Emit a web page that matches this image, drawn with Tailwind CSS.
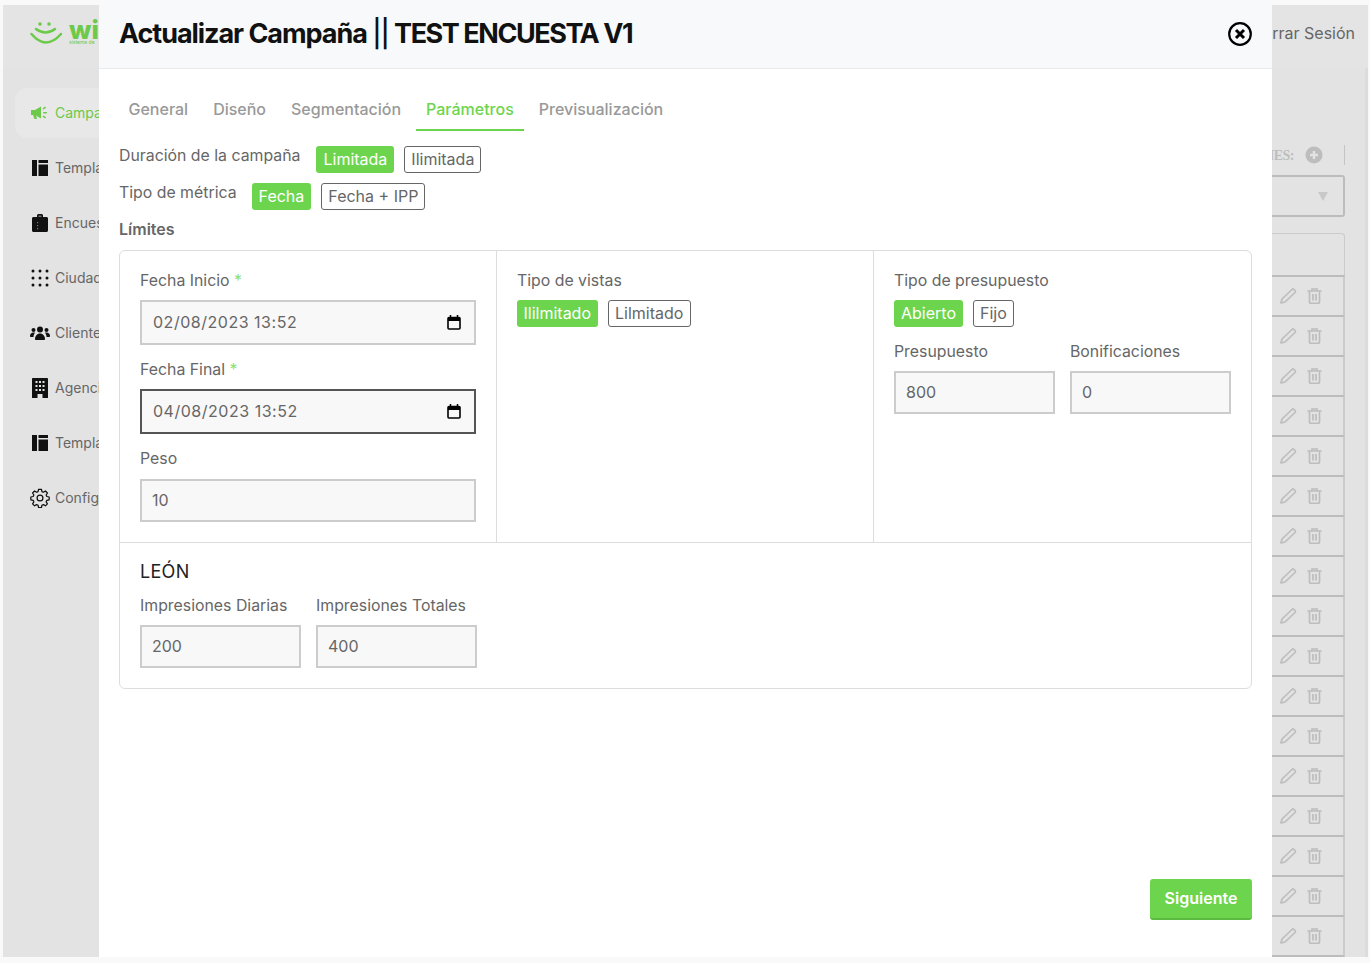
<!DOCTYPE html>
<html lang="es">
<head>
    <meta charset="UTF-8">
    <title>Actualizar Campaña</title>
    <script src="https://cdn.jsdelivr.net/npm/@tailwindcss/browser@4"></script>
</head>
<body class="overflow-hidden font-['Inter',sans-serif]">
<div class="relative w-[1370px] h-[963px] overflow-hidden bg-[#f9f9f9] pl-[3px] pr-[2px] pt-[5px] pb-[6px]">

    <!-- Page behind the modal -->
    <div class="flex flex-col h-full bg-[#e3e3e3]">
        <header class="flex items-center justify-between h-[63px] shrink-0 pb-[7px] pl-[27px] pr-[13px] bg-[#e4e4e4]">
            <div class="flex items-center gap-[7px]">
                <svg class="mt-[2px]" width="32" height="24" viewBox="0 0 32 24" fill="none"><circle cx="10" cy="2" r="1.800" fill="#6cc94a"/><circle cx="19" cy="2" r="1.800" fill="#6cc94a"/><path d="M6 7Q15.500 14 25 7" stroke="#6cc94a" stroke-width="2.500" stroke-linecap="round"/><path d="M1.500 12Q16 29 31 12" stroke="#6cc94a" stroke-width="2.500" stroke-linecap="round"/></svg>
                <div class="flex flex-col leading-none">
                    <span class="text-[26px] leading-[18px] font-extrabold text-[#6cc94a]">wi</span>
                    <span class="text-[5px] leading-[6px] text-[#6cc94a] whitespace-nowrap">sistema de</span>
                </div>
            </div>
            <span class="text-base text-[#666]">Cerrar Sesión</span>
        </header>
        <div class="flex flex-1 min-h-0 border-r-[3px] border-[#dcdcdc]">
            <!-- Sidebar -->
            <nav class="w-[200px] shrink-0 pt-[20px] pl-[12px] flex flex-col gap-[5px] text-sm text-[#666]">
                <a class="flex items-center gap-[6px] h-[50px] pl-[15px] rounded-xl bg-[#e8e8e8] text-[#6cc94a]">
                    <svg class="w-[19px] h-[16px]" viewBox="0 0 19 16" fill="#6cc94a"><path d="M1 5h4l6-3.500v12L5 10H1z"/><path d="M3 10h3l1 4H4.500z"/><rect x="13" y="7" width="4" height="1.500" rx=".7"/><rect x="12.500" y="2.500" width="3.500" height="1.500" rx=".7" transform="rotate(-35 14 3)"/><rect x="12.500" y="11" width="3.500" height="1.500" rx=".7" transform="rotate(35 14 12)"/></svg>
                    <span>Campañas</span>
                </a>
                <a class="flex items-center gap-[7px] h-[50px] pl-[17px]">
                    <svg class="w-[16px] h-[16px]" viewBox="0 0 16 16" fill="#111"><rect x="0" y="0" width="5" height="16"/><rect x="6.500" y="0" width="9.500" height="3"/><rect x="6.500" y="4.500" width="9.500" height="11.500"/></svg>
                    <span>Templates</span>
                </a>
                <a class="flex items-center gap-[7px] h-[50px] pl-[17px]">
                    <svg class="w-[16px] h-[18px]" viewBox="0 0 16 18" fill="#111"><path d="M1.500 3H5V1.500C5 .7 5.700 0 6.500 0h3C10.300 0 11 .7 11 1.500V3h3.500c.8 0 1.500.7 1.500 1.500V16.500c0 .8-.7 1.500-1.500 1.500h-13C.7 18 0 17.300 0 16.500V4.500C0 3.700.7 3 1.500 3z"/><g fill="#777"><rect x="6.500" y="1.500" width="3" height="1.500"/><rect x="5" y="8" width="1.200" height="1.200"/><rect x="5" y="11" width="1.200" height="1.200"/><rect x="5" y="14" width="1.200" height="1.200"/></g></svg>
                    <span>Encuestas</span>
                </a>
                <a class="flex items-center gap-[6px] h-[50px] pl-[16px]">
                    <svg class="w-[18px] h-[18px]" viewBox="0 0 18 18" fill="#111"><circle cx="2" cy="2" r="1.500"/><circle cx="9" cy="2" r="1.500"/><circle cx="16" cy="2" r="1.500"/><circle cx="2" cy="9" r="1.500"/><circle cx="9" cy="9" r="1.500"/><circle cx="16" cy="9" r="1.500"/><circle cx="2" cy="16" r="1.500"/><circle cx="9" cy="16" r="1.500"/><circle cx="16" cy="16" r="1.500"/></svg>
                    <span>Ciudades</span>
                </a>
                <a class="flex items-center gap-[5px] h-[50px] pl-[15px]">
                    <svg class="w-[20px] h-[14px]" viewBox="0 0 20 14" fill="#111"><circle cx="10" cy="3.500" r="3"/><circle cx="3.500" cy="4" r="2"/><circle cx="16.500" cy="4" r="2"/><path d="M5 13c0-3 2-5.500 5-5.500S15 10 15 13c0 .6-.4 1-1 1H6c-.6 0-1-.4-1-1z"/><path d="M0 10c0-2 1.500-3.500 3.500-3.500.6 0 1 .1 1.500.3C4 8 3.500 9.500 3.500 11H1c-.6 0-1-.4-1-1z"/><path d="M20 10c0-2-1.500-3.500-3.500-3.500-.6 0-1 .1-1.500.3 1 1.200 1.500 2.700 1.500 4.200H19c.6 0 1-.4 1-1z"/></svg>
                    <span>Clientes</span>
                </a>
                <a class="flex items-center gap-[7px] h-[50px] pl-[17px]">
                    <svg class="w-[16px] h-[20px]" viewBox="0 0 16 20" fill="#111" fill-rule="evenodd"><path d="M1 0h14c.6 0 1 .4 1 1v19h-5.500v-4h-5v4H0V1c0-.6.4-1 1-1zM3.500 3v2h2V3zm3.500 0v2h2V3zm3.500 0v2h2V3zM3.500 7v2h2V7zM7 7v2h2V7zm3.500 0v2h2V7zM3.500 11v2h2v-2zM7 11v2h2v-2zm3.500 0v2h2v-2z"/></svg>
                    <span>Agencias</span>
                </a>
                <a class="flex items-center gap-[7px] h-[50px] pl-[17px]">
                    <svg class="w-[16px] h-[16px]" viewBox="0 0 16 16" fill="#111"><rect x="0" y="0" width="5" height="16"/><rect x="6.500" y="0" width="9.500" height="3"/><rect x="6.500" y="4.500" width="9.500" height="11.500"/></svg>
                    <span>Templates</span>
                </a>
                <a class="flex items-center gap-[5px] h-[50px] pl-[15px]">
                    <svg class="w-[20px] h-[20px]" viewBox="0 0 24 24" fill="none" stroke="#111" stroke-width="1.500"><path d="M10.300 2.500h3.400l.6 2.800 1.800.8 2.400-1.500 2.400 2.400-1.500 2.400.8 1.800 2.800.6v3.400l-2.800.6-.8 1.800 1.500 2.400-2.400 2.400-2.400-1.500-1.800.8-.6 2.800h-3.400l-.6-2.800-1.800-.8-2.400 1.500-2.400-2.400 1.500-2.400-.8-1.800-2.800-.6v-3.400l2.800-.6.8-1.800-1.500-2.400 2.400-2.400 2.400 1.500 1.800-.8z" transform="translate(0 -1)" stroke-linejoin="round"/><circle cx="12" cy="12" r="3.500"/></svg>
                    <span>Configuración</span>
                </a>
            </nav>
            <!-- Main column, mostly behind the modal -->
            <main class="flex-1 min-w-0 pr-[20px] flex flex-col items-end">
                <div class="flex items-center h-[20px] mt-[77px] text-[#bdbdbd]">
                    <span class="font-['Liberation_Serif',serif] text-[14px] font-bold tracking-[-0.5px]">ACCIONES:</span>
                    <svg class="w-[18px] h-[18px] ml-[11px]" viewBox="0 0 18 18"><circle cx="9" cy="9" r="8.500" fill="#bdbdbd"/><path d="M9 5v8M5 9h8" stroke="#e3e3e3" stroke-width="2.500"/></svg>
                    <span class="w-px h-[20px] bg-[#c4c4c4] ml-[21px]"></span>
                </div>
                <div class="flex items-center justify-end w-[400px] h-[42px] mt-[10px] pr-[15px] border-2 border-[#bcbcbc] rounded-[3px]">
                    <svg class="w-[10px] h-[9px]" viewBox="0 0 12 11" fill="#c8c8c8"><path d="M0 0h12L6 11z"/></svg>
                </div>
                <div id="rows" class="w-[600px] mt-[16px] flex flex-col">
                    <div class="h-[44px] border border-b-2 border-[#cbcbcb] border-b-[#bcbcbc] rounded-t-[4px]"></div>
                </div>
            </main>
        </div>
    </div>

    <!-- Modal -->
    <section class="absolute left-[99px] top-0 w-[1173px] h-[957px] flex flex-col bg-white">
        <div class="flex items-center justify-between h-[69px] shrink-0 pl-[20px] pr-[20px] bg-[#f8f9fa] border-b border-[#e9ecef]">
            <h1 class="text-[27px] font-bold tracking-[-1.05px] text-[#111]">Actualizar Campaña <span class="font-medium">||</span> <span class="tracking-[-1.45px]">TEST ENCUESTA V1</span></h1>
            <svg class="w-[24px] h-[24px]" viewBox="0 0 24 24" fill="none" stroke="#000"><circle cx="12" cy="12" r="10.800" stroke-width="2.200"/><path d="M8 8l8 8M16 8l-8 8" stroke-width="3"/></svg>
        </div>

        <div class="flex flex-col flex-1 min-h-0 px-[20px]">
            <!-- Tabs -->
            <div class="flex gap-[5px] h-[62px] pt-[20px] -ml-[0.5px] text-base font-medium text-[#999]">
                <a class="h-[42px] px-[10px] pt-[9px] leading-[22px]">General</a>
                <a class="h-[42px] px-[10px] pt-[9px] leading-[22px]">Diseño</a>
                <a class="h-[42px] px-[10px] pt-[9px] leading-[22px]">Segmentación</a>
                <a class="h-[42px] px-[10px] pt-[9px] leading-[22px] text-[#6dd54d] border-b-2 border-[#6dd54d]">Parámetros</a>
                <a class="h-[42px] px-[10px] pt-[9px] leading-[22px]">Previsualización</a>
            </div>

            <div class="flex gap-[16px] mt-[15px] h-[27px] text-base text-[#666]">
                <span class="leading-[20px] text-[15.85px]">Duración de la campaña</span>
                <div class="flex gap-[10px]">
                    <span class="h-[27px] px-[7px] leading-[27px] rounded-[3px] bg-[#6dd54d] text-white">Limitada</span>
                    <span class="h-[27px] px-[6px] leading-[25px] rounded-[3px] border border-[#666]">Ilimitada</span>
                </div>
            </div>
            <div class="flex gap-[15px] mt-[10px] h-[27px] text-base text-[#666]">
                <span class="leading-[20px] text-[15.85px]">Tipo de métrica</span>
                <div class="flex gap-[10px]">
                    <span class="h-[27px] px-[7px] leading-[27px] rounded-[3px] bg-[#6dd54d] text-white">Fecha</span>
                    <span class="h-[27px] px-[6px] leading-[25px] rounded-[3px] border border-[#666]">Fecha + IPP</span>
                </div>
            </div>
            <div class="mt-[9px] h-[20px] leading-[20px] text-base font-semibold text-[#666]">Límites</div>

            <!-- Limits card -->
            <div class="mt-[11px] h-[439px] flex flex-col border border-[#ddd] rounded-[6px] text-base text-[#666]">
                <div class="grid grid-cols-3 h-[292px] border-b border-[#ddd]">
                    <div class="px-[20px] pt-[19px] border-r border-[#ddd]">
                        <label class="block h-[20px] leading-[22px] text-[15.85px]">Fecha Inicio <span class="text-[#8be06e]">*</span></label>
                        <div class="relative mt-[10px]">
                            <input value="02/08/2023 13:52" class="w-full h-[45px] pl-[11px] pb-[2px] border-2 border-[#ccc] bg-[#f8f8f8] text-[#666] outline-none tracking-[0.52px]">
                            <svg class="absolute right-[15px] top-[15px] w-[14px] h-[15px]" viewBox="0 0 14 15" fill="none" stroke="#000"><rect x="1" y="2.500" width="12" height="11.500" rx="1" stroke-width="1.600"/><path d="M1 4.500h12" stroke-width="3"/><path d="M3.500 0v3M10.500 0v3" stroke-width="1.500"/></svg>
                        </div>
                        <label class="block h-[20px] mt-[14px] leading-[22px] text-[15.85px]">Fecha Final <span class="text-[#8be06e]">*</span></label>
                        <div class="relative mt-[10px]">
                            <input value="04/08/2023 13:52" class="w-full h-[45px] pl-[11px] pb-[2px] border-2 border-[#555] bg-[#f8f8f8] text-[#666] outline-none tracking-[0.52px]">
                            <svg class="absolute right-[15px] top-[15px] w-[14px] h-[15px]" viewBox="0 0 14 15" fill="none" stroke="#000"><rect x="1" y="2.500" width="12" height="11.500" rx="1" stroke-width="1.600"/><path d="M1 4.500h12" stroke-width="3"/><path d="M3.500 0v3M10.500 0v3" stroke-width="1.500"/></svg>
                        </div>
                        <label class="block h-[20px] mt-[14px] leading-[22px] text-[15.85px]">Peso</label>
                        <input value="10" class="block w-full h-[43px] mt-[11px] pl-[10px] pb-[2px] border-2 border-[#ccc] bg-[#f8f8f8] text-[#666] outline-none">
                    </div>
                    <div class="px-[20px] pt-[19px] border-r border-[#ddd]">
                        <label class="block h-[20px] leading-[22px] text-[15.85px]">Tipo de vistas</label>
                        <div class="flex gap-[10px] mt-[10px]">
                            <span class="h-[27px] px-[6.5px] leading-[27px] rounded-[3px] bg-[#6dd54d] text-white">Ililmitado</span>
                            <span class="h-[27px] px-[6.5px] leading-[25px] rounded-[3px] border border-[#666]">Lilmitado</span>
                        </div>
                    </div>
                    <div class="px-[20px] pt-[19px]">
                        <label class="block h-[20px] leading-[22px] text-[15.85px]">Tipo de presupuesto</label>
                        <div class="flex gap-[10px] mt-[10px]">
                            <span class="h-[27px] px-[7px] leading-[27px] rounded-[3px] bg-[#6dd54d] text-white">Abierto</span>
                            <span class="h-[27px] px-[6px] leading-[25px] rounded-[3px] border border-[#666]">Fijo</span>
                        </div>
                        <div class="flex gap-[15px] mt-[14px]">
                            <div class="w-[161px]">
                                <label class="block h-[20px] leading-[22px] text-[15.85px]">Presupuesto</label>
                                <input value="800" class="block w-full h-[43px] mt-[10px] pl-[10px] pb-[2px] border-2 border-[#ccc] bg-[#f8f8f8] text-[#666] outline-none">
                            </div>
                            <div class="w-[161px]">
                                <label class="block h-[20px] leading-[22px] text-[15.85px]">Bonificaciones</label>
                                <input value="0" class="block w-full h-[43px] mt-[10px] pl-[10px] pb-[2px] border-2 border-[#ccc] bg-[#f8f8f8] text-[#666] outline-none">
                            </div>
                        </div>
                    </div>
                </div>
                <div class="px-[20px] pt-[18px]">
                    <div class="h-[22px] leading-[22px] text-lg tracking-[0.3px] text-[#222]">LEÓN</div>
                    <div class="flex gap-[15px] mt-[12px]">
                        <div class="w-[161px]">
                            <label class="block h-[20px] leading-[22px] whitespace-nowrap text-[15.85px]">Impresiones Diarias</label>
                            <input value="200" class="block w-full h-[43px] mt-[10px] pl-[10px] pb-[2px] border-2 border-[#ccc] bg-[#f8f8f8] text-[#666] outline-none">
                        </div>
                        <div class="w-[161px]">
                            <label class="block h-[20px] leading-[22px] whitespace-nowrap text-[15.85px]">Impresiones Totales</label>
                            <input value="400" class="block w-full h-[43px] mt-[10px] pl-[10px] pb-[2px] border-2 border-[#ccc] bg-[#f8f8f8] text-[#666] outline-none">
                        </div>
                    </div>
                </div>
            </div>

            <div class="flex justify-end mt-[190px]">
                <button class="w-[102px] h-[41px] pb-[2px] rounded-[3px] bg-[#6dd54d] border-b-2 border-[#5cb941] text-base font-semibold text-white">Siguiente</button>
            </div>
        </div>
    </section>
</div>

<script>
    // filas de la tabla de campañas
    const rows = document.getElementById('rows');
    for (let i = 0; i < 17; i++) {
        rows.insertAdjacentHTML('beforeend', `
            <div class="flex items-center justify-end gap-[10px] h-[40px] pr-[21px] border-r-2 border-b-2 border-[#bcbcbc] border-r-[#cbcbcb]">
                <svg class="w-[17px] h-[16px]" viewBox="0 0 17 16" fill="none" stroke="#bdbdbd" stroke-width="1.700"><path d="M1 15l1-4L12 1.500c.6-.6 1.400-.6 2 0l1 1c.6.6.6 1.400 0 2L5 14z" stroke-linejoin="round"/></svg>
                <svg class="w-[15px] h-[16px]" viewBox="0 0 15 16" fill="none" stroke="#bdbdbd" stroke-width="1.700"><path d="M.5 3h14M5 3V1h5v2"/><path d="M2.500 3v11c0 .8.700 1.300 1.300 1.300h7.400c.6 0 1.300-.5 1.300-1.300V3"/><path d="M6 6v6.500M9 6v6.500"/></svg>
            </div>`);
    }
</script>
</body>
</html>
